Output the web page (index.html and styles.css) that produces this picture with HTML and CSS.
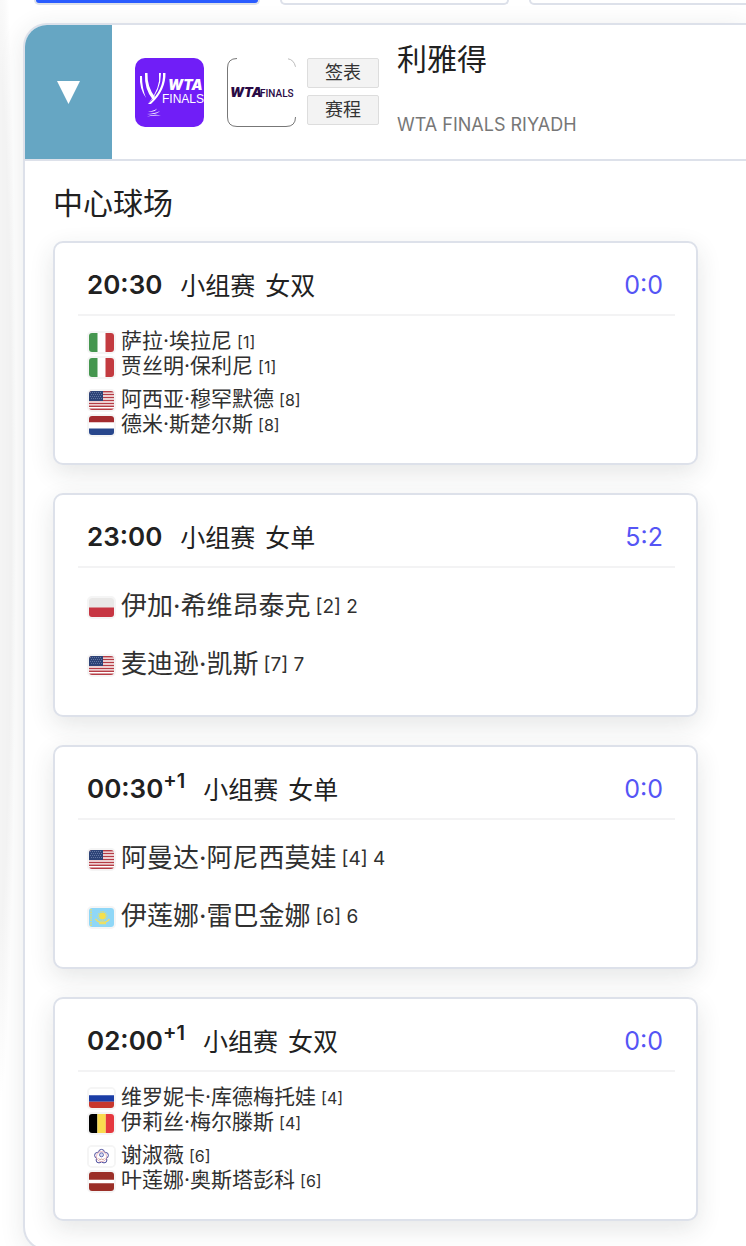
FILE: index.html
```
<!DOCTYPE html>
<html lang="zh-CN">
<head>
  <meta charset="UTF-8">
  <meta name="viewport" content="width=device-width, initial-scale=1.0">
  <title>利雅得 WTA FINALS</title>
  <link rel="stylesheet" href="styles.css">
</head>
<body>
  <!-- flags -->
  <svg class="defs" aria-hidden="true">
    <symbol id="ita" viewBox="0 0 25 19"><path fill="#fff" d="M0 0h25v19H0z"/><path fill="#45964f" d="M0 0h8.5v19H0z"/><path fill="#c33b40" d="M16.5 0H25v19h-8.5z"/></symbol>
    <symbol id="usa" viewBox="0 0 25 19">
      <path fill="#fff" d="M0 0h25v19H0z"/>
      <path stroke="#b53c45" stroke-width="1.46" d="M0 .7h25M0 3.6h25M0 6.5h25M0 9.5h25M0 12.4h25M0 15.3h25M0 18.3h25"/>
      <path fill="#2d4377" d="M0 0h14v10H0z"/>
      <path stroke="#8494bb" stroke-width=".8" stroke-dasharray=".8 1.2" d="M1 1.500h12M2 3.500h11M1 5.500h12M2 7.500h11"/>
    </symbol>
    <symbol id="ned" viewBox="0 0 25 19"><path fill="#fff" d="M0 0h25v19H0z"/><path fill="#a32b2f" d="M0 0h25v6.3H0z"/><path fill="#28478c" d="M0 12.5h25V19H0z"/></symbol>
    <symbol id="pol" viewBox="0 0 25 19"><path fill="#e9e8e7" d="M0 0h25v19H0z"/><path fill="#c73643" d="M0 9.5h25V19H0z"/></symbol>
    <symbol id="kaz" viewBox="0 0 25 19">
      <path fill="#8fd7f7" d="M0 0h25v19H0z"/>
      <circle cx="13.5" cy="8" r="3.4" fill="#f6e04b"/>
      <circle cx="13.5" cy="8" r="4.5" fill="none" stroke="#f6e04b" stroke-width="1" stroke-dasharray=".8 1"/>
      <path fill="none" stroke="#ecdf66" stroke-width="1.3" d="M6.5 11q3 4 7 3 4 1 7-3M10 15.5h7"/>
      <path stroke="#ecdf66" stroke-width="1.4" stroke-dasharray="1.6 1" d="M2 1v17"/>
    </symbol>
    <symbol id="rus" viewBox="0 0 25 19"><path fill="#fff" d="M0 0h25v19H0z"/><path fill="#1b3da6" d="M0 6.3h25v6.4H0z"/><path fill="#c8372d" d="M0 12.7h25V19H0z"/></symbol>
    <symbol id="bel" viewBox="0 0 25 19"><path d="M0 0h8.4v19H0z"/><path fill="#fadb4f" d="M8.4 0h8.4v19H8.4z"/><path fill="#e5383f" d="M16.8 0H25v19h-8.2z"/></symbol>
    <symbol id="tpe" viewBox="0 0 25 19">
      <path fill="#fff" d="M0 0h25v19H0z"/>
      <g fill="#fff" stroke="#4c4c9c" stroke-width="1"><circle cx="12.5" cy="5.3" r="2.9"/><circle cx="16.5" cy="8.3" r="2.9"/><circle cx="15" cy="13" r="2.9"/><circle cx="10" cy="13" r="2.9"/><circle cx="8.5" cy="8.3" r="2.9"/></g>
      <circle cx="12.5" cy="9.6" r="5" fill="#fff" stroke="#e4a5ac" stroke-width=".8"/>
      <circle cx="12.5" cy="7.8" r="2" fill="#d5daf0" stroke="#5a62b0" stroke-width=".9"/>
      <path fill="none" stroke="#c98b78" stroke-width=".8" d="M9.5 11.5q1.5 2 3 .5 1.5 1.5 3-.5"/>
    </symbol>
    <symbol id="lat" viewBox="0 0 25 19"><path fill="#9b2f28" d="M0 0h25v19H0z"/><path fill="#fff" d="M0 7.7h25v3.6H0z"/></symbol>
  </svg>

  <nav class="tabs">
    <button class="tab active" aria-label="WTA"></button>
    <button class="tab" aria-label="ATP"></button>
    <button class="tab" aria-label="ITF"></button>
  </nav>

  <section class="tour">
    <header class="tour-head">
      <button class="toggle" aria-label="收起">
        <svg class="arrow" viewBox="0 0 23 23"><path fill="#fff" d="M0 0h23L11.5 23z"/></svg>
      </button>
      <div class="tour-body">
        <svg class="logo" viewBox="0 0 69 69">
          <rect width="69" height="69" rx="10" fill="#701ef7"/>
          <g fill="#fff">
            <path d="M5 18q-1 12 6 22-4-10-4-22z"/>
            <path d="M10 15q-1 16 8 27l2-3Q12 29 12.500 15z"/>
            <path d="M24 15q2 15-11 31 13-13 13-31z"/>
            <path d="M28 15q1 17-15 31l3 0Q31 32 30.500 15z"/>
            <path d="M13 53.500q7 1 9-3-3 2.500-9 3zM12 56q9 1 13-3-5 2.500-13 3zM12 58.500q7-3 14-1-7-.5-14 1z"/>
          </g>
          <text class="logo-wta" x="33" y="32">WTA</text>
          <text class="logo-finals" x="27" y="45">FINALS</text>
        </svg>
        <svg class="logo" viewBox="0 0 69 69">
          <path fill="none" stroke="#777" d="M10 .5Q.5.5.5 10v49q0 9.500 9.500 9.500h49q9.500 0 9.500-9.500"/>
          <path fill="none" stroke="#bbb" d="M61 .8q6 1 7.500 8"/>
          <text class="logo-wta dark" x="3" y="39">WTA</text>
          <text class="logo-narrow" x="33" y="39">FINALS</text>
        </svg>
        <div class="links">
          <button class="link-btn">签表</button>
          <button class="link-btn">赛程</button>
        </div>
        <div class="names">
          <h2 class="city">利雅得</h2>
          <p class="event">WTA FINALS RIYADH</p>
        </div>
      </div>
    </header>

    <div class="court">
      <h3 class="court-name">中心球场</h3>

      <article class="match doubles">
        <div class="match-head">
          <span class="time">20:30</span>
          <span class="round"><span>小组赛</span> <span>女双</span></span>
          <span class="score">0:0</span>
        </div>
        <div class="team">
          <div class="player"><svg class="flag"><use href="#ita"/></svg><span class="name">萨拉·埃拉尼</span><span class="seed">[1]</span></div>
          <div class="player"><svg class="flag"><use href="#ita"/></svg><span class="name">贾丝明·保利尼</span><span class="seed">[1]</span></div>
        </div>
        <div class="team">
          <div class="player"><svg class="flag"><use href="#usa"/></svg><span class="name">阿西亚·穆罕默德</span><span class="seed">[8]</span></div>
          <div class="player"><svg class="flag"><use href="#ned"/></svg><span class="name">德米·斯楚尔斯</span><span class="seed">[8]</span></div>
        </div>
      </article>

      <article class="match singles">
        <div class="match-head">
          <span class="time">23:00</span>
          <span class="round"><span>小组赛</span> <span>女单</span></span>
          <span class="score">5:2</span>
        </div>
        <div class="team">
          <div class="player"><svg class="flag"><use href="#pol"/></svg><span class="name">伊加·希维昂泰克</span><span class="seed">[2] 2</span></div>
        </div>
        <div class="team">
          <div class="player"><svg class="flag"><use href="#usa"/></svg><span class="name">麦迪逊·凯斯</span><span class="seed">[7] 7</span></div>
        </div>
      </article>

      <article class="match singles">
        <div class="match-head">
          <span class="time">00:30<sup>+1</sup></span>
          <span class="round"><span>小组赛</span> <span>女单</span></span>
          <span class="score">0:0</span>
        </div>
        <div class="team">
          <div class="player"><svg class="flag"><use href="#usa"/></svg><span class="name">阿曼达·阿尼西莫娃</span><span class="seed">[4] 4</span></div>
        </div>
        <div class="team">
          <div class="player"><svg class="flag"><use href="#kaz"/></svg><span class="name">伊莲娜·雷巴金娜</span><span class="seed">[6] 6</span></div>
        </div>
      </article>

      <article class="match doubles">
        <div class="match-head">
          <span class="time">02:00<sup>+1</sup></span>
          <span class="round"><span>小组赛</span> <span>女双</span></span>
          <span class="score">0:0</span>
        </div>
        <div class="team">
          <div class="player"><svg class="flag"><use href="#rus"/></svg><span class="name">维罗妮卡·库德梅托娃</span><span class="seed">[4]</span></div>
          <div class="player"><svg class="flag"><use href="#bel"/></svg><span class="name">伊莉丝·梅尔滕斯</span><span class="seed">[4]</span></div>
        </div>
        <div class="team">
          <div class="player"><svg class="flag"><use href="#tpe"/></svg><span class="name">谢淑薇</span><span class="seed">[6]</span></div>
          <div class="player"><svg class="flag"><use href="#lat"/></svg><span class="name">叶莲娜·奥斯塔彭科</span><span class="seed">[6]</span></div>
        </div>
      </article>
    </div>
  </section>
</body>
</html>
```
FILE: styles.css
```
* {
  box-sizing: border-box;
}
body {
  margin: 0;
  padding-left: 23px;
  font-family: Inter, "Noto Sans CJK SC", sans-serif;
  color: #212121;
  background: radial-gradient(ellipse closest-side, #f4f4f4 70%, #fff) no-repeat -16px -100px / 32px 1200px #fff;
  overflow-x: hidden;
}
h2, h3, p {
  margin: 0;
  font-weight: 400;
}
button {
  font-family: inherit;
  padding: 0;
}
.defs {
  display: none;
}

.tabs {
  display: flex;
  gap: 20px;
  padding-left: 11px;
  overflow: hidden;
}
.tab {
  flex: 0 0 229px;
  height: 5px;
  background: #fff;
  border: 2px solid #dde1ea;
  border-top: 0;
  border-radius: 0 0 12px 12px;
}
.tab.active {
  flex-basis: 226px;
  background: #2a5cff;
}

.tour {
  margin-top: 18px;
  border: 2px solid #dde1ea;
  border-right: 0;
  border-radius: 24px 0 0 24px;
  background: #fff;
  box-shadow: 0 4px 24px rgba(40, 50, 50, 0.1);
  overflow: hidden;
}
.tour-head {
  display: flex;
  height: 136px;
  border-bottom: 2px solid #dde1ea;
}
.toggle {
  flex: 0 0 87px;
  border: 0;
  background: #66a6c3;
}
.arrow {
  display: block;
  width: 23px;
  height: 23px;
  margin: 0 auto;
}
.tour-body {
  display: flex;
  align-items: center;
  padding-left: 23px;
}
.logo {
  flex: none;
  width: 69px;
  height: 69px;
  margin-right: 23px;
}
.logo-wta {
  font: italic 900 14px Inter, sans-serif;
  fill: #fff;
}
.logo-finals {
  font: 12px "Liberation Sans", sans-serif;
  fill: #fff;
}
.logo-wta.dark {
  font-size: 13px;
  fill: #2a0a45;
}
.logo-narrow {
  font: 500 10px Roboto, sans-serif;
  fill: #2a0a45;
}
.links {
  display: flex;
  flex-direction: column;
  gap: 7px;
  margin: 0 0 2px -12px;
}
.link-btn {
  width: 72px;
  height: 30px;
  border: 1px solid #ddd;
  border-radius: 2px;
  background: #f3f3f3;
  font-size: 18px;
  line-height: 28px;
  color: #333;
}
.names {
  margin-left: 18px;
}
.city {
  font-size: 30px;
  line-height: 66px;
}
.event {
  font-size: 18px;
  line-height: 66px;
  color: #777;
}

.court {
  width: 701px;
  max-width: 100%;
  padding: 16px 28px 28px 28px;
}
.court-name {
  margin-bottom: 12px;
  font-size: 30px;
  line-height: 52px;
}
.match {
  padding: 12px 21px 26px 23px;
  border: 2px solid #dde1ea;
  border-radius: 10px;
  background: #fff;
  box-shadow: 0 8px 24px rgba(40, 50, 50, 0.12);
}
.match + .match {
  margin-top: 28px;
}
.match-head {
  display: flex;
  align-items: center;
  height: 61px;
  margin-bottom: 13px;
  padding: 0 12px 0 9px;
  border-bottom: 2px solid #f3f3f4;
}
.time {
  font-size: 26px;
  font-weight: 600;
}
.time sup {
  font-size: 20px;
  line-height: 0;
}
.round {
  display: flex;
  gap: 10px;
  margin: 0 0 2px 18px;
  font-size: 25px;
}
.score {
  margin-left: auto;
  font-size: 25px;
  color: #5555f5;
}
.team {
  display: flex;
  flex-direction: column;
  justify-content: center;
  height: 50px;
  padding-left: 9px;
  color: #303030;
}
.team + .team {
  margin-top: 8px;
}
.player {
  display: flex;
  align-items: center;
  height: 25px;
}
.flag {
  width: 29px;
  height: 23px;
  margin: 2px 5px 0 0;
  border: 2px solid #f5f5f5;
  border-radius: 5px;
}
.name {
  margin: 0 5px 2px 0;
  font-size: 21px;
  line-height: 25px;
}
.seed {
  font-size: 16px;
}
.singles .name {
  font-size: 26px;
}
.singles .seed {
  font-size: 19px;
}
```
